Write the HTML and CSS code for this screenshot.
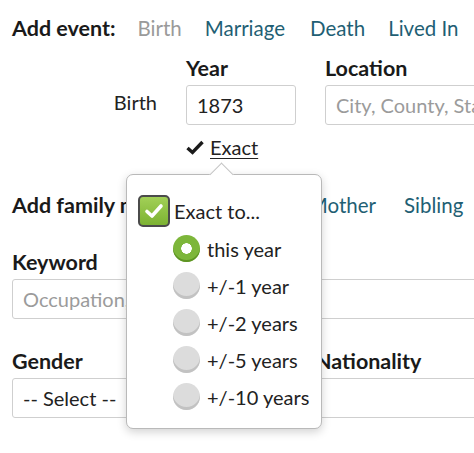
FILE: index.html
```html
<!DOCTYPE html>
<html>
<head>
<meta charset="utf-8">
<link rel="stylesheet" href="styles.css">
</head>
<body>
<div class="page">
  <div class="event-row">
    <span class="heading">Add event:</span>
    <span class="ev disabled">Birth</span>
    <a class="ev link">Marriage</a>
    <a class="ev link">Death</a>
    <a class="ev link">Lived In</a>
  </div>

  <div class="fields">
    <div class="col-label"></div>
    <div class="col-year heading">Year</div>
    <div class="col-loc heading">Location</div>

    <div class="col-label row-label">Birth</div>
    <div class="col-year"><div class="input">1873</div></div>
    <div class="col-loc"><div class="input placeholder">City, County, State, Country</div></div>

    <div class="col-label"></div>
    <div class="col-year exact-wrap">
      <span class="exact"><svg class="tick" width="18" height="15" viewBox="0 0 18 15"><path d="M1.5 8 L6.5 12.5 L16.5 2" fill="none" stroke="#1a1a1a" stroke-width="3.4" stroke-linejoin="miter"/></svg><u>Exact</u></span>
      <div class="popover">
        <div class="arrow"></div>
        <div class="check-row">
          <span class="checkbox">
            <svg width="22" height="22" viewBox="0 0 22 22"><path d="M4 11.5 L9 16 L18 6" fill="none" stroke="#fff" stroke-width="3.6" stroke-linecap="round" stroke-linejoin="round"/></svg>
          </span>
          <span>Exact to...</span>
        </div>
        <div class="radio-row"><span class="radio on"></span><span>this year</span></div>
        <div class="radio-row"><span class="radio"></span><span>+/-1 year</span></div>
        <div class="radio-row"><span class="radio"></span><span>+/-2 years</span></div>
        <div class="radio-row"><span class="radio"></span><span>+/-5 years</span></div>
        <div class="radio-row"><span class="radio"></span><span>+/-10 years</span></div>
      </div>
    </div>
    <div class="col-loc"></div>
  </div>

  <div class="family-row">
    <span class="heading fam-head">Add family member:</span>
    <a class="fam link">Father</a>
    <a class="fam link mother">Mother</a>
    <a class="fam link sibling">Sibling</a>
  </div>

  <div class="block keyword">
    <div class="heading">Keyword</div>
    <div class="input wide placeholder">Occupation, Religion, etc.</div>
  </div>

  <div class="two-col">
    <div class="block">
      <div class="heading">Gender</div>
      <div class="input">-- Select --</div>
    </div>
    <div class="block">
      <div class="heading">Nationality</div>
      <div class="input"></div>
    </div>
  </div>
</div>
</body>
</html>
```

FILE: styles.css
```css
html, body {
  margin: 0;
  padding: 0;
  background: #fff;
}
body {
  font-family: Lato, "Source Sans Pro", "Liberation Sans", sans-serif;
  font-size: 20px;
  color: #222;
  overflow: hidden;
  width: 474px;
  height: 453px;
}
.page {
  padding: 15px 0 0 12px;
  width: 700px;
}
.heading {
  font-weight: bold;
  font-size: 21.5px;
  color: #1a1a1a;
  white-space: nowrap;
}
.link {
  color: #1f5f74;
  font-size: 20.5px;
  white-space: nowrap;
}
.disabled {
  color: #9a9a9a;
  font-size: 20.5px;
}
.event-row {
  display: flex;
  align-items: baseline;
  height: 26px;
  line-height: 26px;
}
.event-row .heading { margin-right: 22px; }
.ev { margin-right: 23px; }
.ev:nth-child(3) { margin-right: 25px; }

.fields {
  display: grid;
  grid-template-columns: 145px 110px 300px;
  column-gap: 29px;
  margin-top: 14px;
}
.fields > .heading {
  line-height: 26px;
  height: 30px;
}
.row-label {
  text-align: right;
  line-height: 40px;
  height: 40px;
  margin-top: -3px;
}
.input {
  box-sizing: border-box;
  height: 40px;
  border: 1px solid #cfcfcf;
  border-radius: 3px;
  padding: 0 10px;
  line-height: 38px;
  white-space: nowrap;
  overflow: hidden;
  background: #fff;
}
.placeholder { color: #9b9b9b; }
.exact-wrap {
  position: relative;
  height: 42px;
}
.exact {
  display: flex;
  align-items: center;
  gap: 6px;
  line-height: 26px;
  margin-top: 9px;
}
.exact u {
  text-decoration-thickness: 1px;
  text-underline-offset: 3px;
}
.tick { display: block; }

.popover {
  position: absolute;
  left: -60px;
  top: 49px;
  width: 196px;
  height: 255px;
  box-sizing: border-box;
  background: #fff;
  border: 1px solid #b9b9b9;
  border-radius: 7px;
  box-shadow: 0 3px 10px rgba(0,0,0,0.18);
  padding: 20px 0 0 11px;
  z-index: 10;
  color: #222;
}
.arrow {
  position: absolute;
  top: -9px;
  left: 86px;
  width: 16px;
  height: 16px;
  background: #fff;
  border-left: 1px solid #c4c4c4;
  border-top: 1px solid #c4c4c4;
  transform: rotate(45deg);
}
.check-row {
  display: flex;
  align-items: center;
  gap: 4px;
  height: 32px;
}
.checkbox {
  box-sizing: border-box;
  width: 32px;
  height: 32px;
  border: 2.5px solid #4b4b4b;
  border-radius: 5px;
  background: linear-gradient(#a2d057, #7cb232);
  display: flex;
  align-items: center;
  justify-content: center;
}
.checkbox svg { display: block; }
.radio-row {
  display: flex;
  align-items: center;
  gap: 7px;
  height: 37px;
  padding-left: 35px;
}
.check-row + .radio-row { margin-top: 3px; }
.radio {
  box-sizing: border-box;
  width: 27px;
  height: 27px;
  border-radius: 50%;
  background: #dcdcdc;
  box-shadow: inset 0 -3px 0 #c2c2c2;
  flex: none;
}
.radio.on {
  background: radial-gradient(circle, #fff 0 5px, #7db63a 5.5px);
  box-shadow: inset 0 -2px 0 #5e9424;
}

.family-row {
  display: flex;
  align-items: baseline;
  line-height: 26px;
  margin-top: 25px;
}
.fam-head { margin-right: 22px; }
.fam { margin-right: 22px; }
.mother { margin-left: 3px; margin-right: 28px; }

.block .heading {
  line-height: 26px;
  height: 30px;
}
.keyword {
  margin-top: 31px;
}
.wide { width: 600px; }
.two-col {
  display: grid;
  grid-template-columns: 290px 300px;
  column-gap: 13px;
  margin-top: 29px;
}
```
